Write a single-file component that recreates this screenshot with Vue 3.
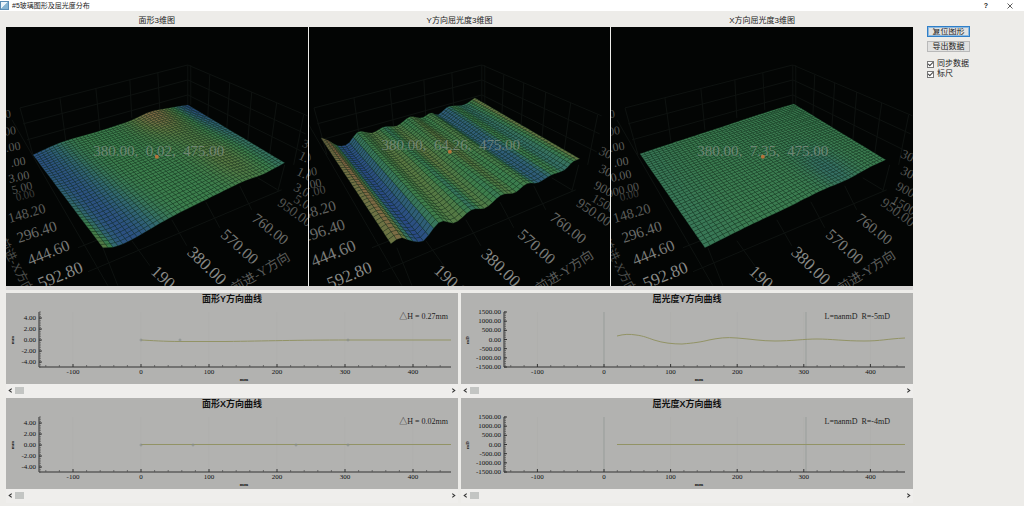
<script setup>
import { ref } from 'vue'

const syncData = ref(true)
const ruler = ref(true)

function homography(p0, p1, p2, p3) {
  const dx1 = p1[0] - p2[0], dx2 = p3[0] - p2[0], dx3 = p0[0] - p1[0] + p2[0] - p3[0]
  const dy1 = p1[1] - p2[1], dy2 = p3[1] - p2[1], dy3 = p0[1] - p1[1] + p2[1] - p3[1]
  const den = dx1 * dy2 - dx2 * dy1
  const g = (dx3 * dy2 - dx2 * dy3) / den
  const h = (dx1 * dy3 - dx3 * dy1) / den
  const a = p1[0] - p0[0] + g * p1[0], b = p3[0] - p0[0] + h * p3[0]
  const d = p1[1] - p0[1] + g * p1[1], e = p3[1] - p0[1] + h * p3[1]
  return (u, v) => {
    const w = g * u + h * v + 1
    return [(a * u + b * v + p0[0]) / w, (d * u + e * v + p0[1]) / w]
  }
}

// Catmull-Rom through points sorted by x
function curveAt(pts, x) {
  const n = pts.length
  if (x <= pts[0][0]) return pts[0][1]
  if (x >= pts[n - 1][0]) return pts[n - 1][1]
  let i = 0
  while (x > pts[i + 1][0]) i++
  const slope = k => {
    const a = pts[Math.max(0, k - 1)], b = pts[Math.min(n - 1, k + 1)]
    return (b[1] - a[1]) / (b[0] - a[0])
  }
  const [x0, y0] = pts[i], [x1, y1] = pts[i + 1]
  const s = x1 - x0, t = (x - x0) / s
  const t2 = t * t, t3 = t2 * t
  return (2 * t3 - 3 * t2 + 1) * y0 + (t3 - 2 * t2 + t) * s * slope(i) +
    (3 * t2 - 2 * t3) * y1 + (t3 - t2) * s * slope(i + 1)
}

const ramp = [
  [0, 42, 74, 134], [0.3, 50, 104, 112], [0.5, 60, 126, 76], [0.72, 92, 120, 66], [1, 138, 104, 70]
]
function shade(t) {
  t = Math.min(1, Math.max(0, t))
  let i = 0
  while (i < ramp.length - 2 && t > ramp[i + 1][0]) i++
  const a = ramp[i], b = ramp[i + 1], k = (t - a[0]) / (b[0] - a[0])
  return `rgb(${[1, 2, 3].map(c => Math.round(a[c] + (b[c] - a[c]) * k)).join(',')})`
}

const bell = (x, w) => Math.exp(-(x * x) / (w * w))

function surface(s) {
  const h = homography(...s.corners)
  const NU = 46, NV = 38
  const at = (u, v) => {
    const p = h(u, v), b = h(u, 0), f = h(u, 1)
    const db = curveAt(s.back, b[0]) - b[1], df = curveAt(s.front, f[0]) - f[1]
    return `${p[0].toFixed(1)},${(p[1] + db * (1 - v) + df * v).toFixed(1)}`
  }
  const cells = []
  for (let j = 0; j < NV; j++) {
    for (let i = 0; i < NU; i++) {
      const u0 = i / NU, u1 = (i + 1) / NU, v0 = j / NV, v1 = (j + 1) / NV
      cells.push({
        points: [at(u0, v0), at(u1, v0), at(u1, v1), at(u0, v1)].join(' '),
        fill: shade(s.tone((u0 + u1) / 2, (v0 + v1) / 2))
      })
    }
  }
  return cells
}

const ridges = [
  [0, 0.85], [0.04, 1], [0.075, 0.5], [0.105, 0.02], [0.15, 0.1], [0.19, 0.45], [0.25, 0.62], [0.3, 0.66], [0.36, 0.4],
  [0.42, 0.64], [0.49, 0.46], [0.55, 0.66], [0.61, 0.48], [0.66, 0.56], [0.72, 0.2], [0.77, 0.22],
  [0.83, 0.52], [0.89, 0.36], [0.95, 0.48], [1, 0.85]
]

// label rows: text, centre x, centre y, rotation, size, opacity
const views = [
  {
    title: '面形3维图',
    box: '6 27 302 259',
    dx: 0,
    corners: [[33, 155], [188, 105], [285, 163], [103, 248]],
    back: [[33, 155], [60, 143], [100, 131], [130, 121], [150, 112], [170, 108], [188, 105]],
    front: [[103, 248], [115, 247], [130, 241], [170, 218], [210, 198], [245, 181], [262, 175], [285, 163]],
    tone: (u, v) => 0.5 - 0.44 * bell(u - 0.13 * v, 0.13) + 0.45 * bell(u - 0.72, 0.14) * bell(v, 0.35) -
      0.4 * bell(u - 1, 0.1) * bell(v, 0.4) + 0.2 * bell(u - 0.78, 0.12) * bell(v - 0.75, 0.3) -
      0.12 * bell(u - 1, 0.08) + 0.4 * bell(u, 0.05) * v * v,
    readout: ['380.00,  0.02,  475.00', 159, 156],
    dot: [157, 157],
    labels: [
      ['0', 8, 114, -8, 12, .5], ['00', 10, 131, -8, 12, .5], ['.00', 13, 147, -10, 12, .55],
      ['.00', 18, 162, -10, 12, .6], ['3.00', 19, 177, -12, 12, .6], ['5.00', 22, 188, -14, 12, .5],
      ['0.00', 25, 195, -14, 11, .35], ['148.20', 27, 214, -16, 14, .55], ['296.40', 37, 233, -18, 15, .65],
      ['444.60', 49, 254, -22, 16, .75], ['592.80', 61, 277, -22, 17, .85],
      ['前进-X方向', 16, 266, 62, 12, .45],
      ['190.00', 170, 286, 43, 17, .85], ['380.00', 206, 267, 44, 17, .85], ['570.00', 239, 248, 42, 16, .75],
      ['760.00', 270, 230, 38, 15, .65], ['950.00', 295, 213, 36, 14, .5], ['5.00', 305, 204, 30, 13, .5],
      ['3.00', 305, 192, 28, 13, .5], ['1.00', 308, 176, 26, 13, .55], ['1.00', 310, 160, 26, 13, .5],
      ['3', 306, 144, 20, 12, .4], ['前进-Y方向', 261, 273, -31, 13, .55]
    ]
  },
  {
    title: 'Y方向屈光度3维图',
    box: '309 27 302 259',
    dx: 294,
    corners: [[321, 139], [475, 98], [580, 159], [391, 244]],
    back: [[321, 138], [329, 141], [338, 146], [348, 144], [358, 132], [372, 133], [384, 127], [397, 126], [410, 117],
      [422, 118], [431, 113], [438, 115], [448, 107], [464, 105], [475, 98]],
    front: [[391, 244], [400, 238], [408, 240], [416, 242], [424, 241], [440, 222], [455, 223], [472, 210], [486, 208],
      [502, 195], [515, 193], [527, 184], [538, 183], [552, 175], [565, 170], [573, 162], [580, 159]],
    tone: (u, v) => curveAt(ridges, u) - (u < 0.08 ? 0.1 * v : 0) + 0.12 * bell(v - 0.4, 0.3) * bell(u - 0.5, 0.2),
    readout: ['380.00,  64.26,  475.00', 451, 150],
    dot: [450, 152],
    labels: [
      ['0', 308, 157, -10, 12, .4], ['00', 311, 172, -10, 12, .5], ['.00', 314, 184, -12, 12, .55],
      ['.00', 318, 191, -14, 12, .45], ['148.20', 316, 212, -16, 15, .6], ['296.40', 324, 232, -18, 16, .65],
      ['444.60', 334, 255, -22, 17, .75], ['592.80', 350, 277, -22, 17, .85],
      ['190.00', 453, 285, 43, 17, .85], ['380.00', 500, 269, 44, 17, .85], ['570.00', 536, 248, 42, 16, .75],
      ['760.00', 568, 229, 38, 15, .65], ['950.00', 594, 213, 34, 14, .55], ['1500.00', 611, 208, 30, 13, .5],
      ['900.00', 611, 193, 28, 13, .55], ['300.00', 616, 176, 26, 13, .55], ['300.00', 616, 158, 26, 13, .5],
      ['前进-Y方向', 565, 272, -33, 13, .55]
    ]
  },
  {
    title: 'X方向屈光度3维图',
    box: '612 27 302 259',
    dx: 606,
    corners: [[641, 154], [795, 104], [887, 160], [706, 248]],
    back: [[641, 154], [680, 141], [720, 128], [750, 118], [775, 110], [795, 104]],
    front: [[706, 248], [750, 226], [790, 207], [820, 192], [850, 179], [870, 168], [887, 160]],
    tone: (u, v) => 0.48 - 0.12 * bell(u - 0.72, 0.1) * bell(v - 0.85, 0.25) - 0.04 * bell(u, 0.15),
    readout: ['380.00,  7.35,  475.00', 764, 156],
    dot: [764, 157],
    labels: [
      ['0', 613, 114, -8, 12, .5], ['00', 615, 131, -8, 12, .5], ['.00', 618, 147, -10, 12, .55],
      ['.00', 622, 162, -10, 12, .6], ['0.00', 622, 176, -12, 12, .6], ['900.00', 624, 190, -14, 12, .5],
      ['0.00', 630, 195, -14, 11, .35], ['148.20', 633, 214, -16, 14, .55], ['296.40', 643, 233, -18, 15, .65],
      ['444.60', 655, 254, -22, 16, .75], ['592.80', 667, 277, -22, 17, .85],
      ['前进-X方向', 620, 266, 62, 12, .45],
      ['190.00', 769, 286, 43, 17, .85], ['380.00', 811, 267, 44, 17, .85], ['570.00', 845, 248, 42, 16, .75],
      ['760.00', 875, 230, 38, 15, .65], ['950.00', 899, 213, 36, 14, .5], ['1500.00', 912, 210, 30, 13, .5],
      ['900.00', 914, 194, 28, 13, .5], ['300.00', 919, 178, 26, 13, .55], ['300.00', 919, 161, 26, 13, .5],
      ['前进-Y方向', 868, 272, -33, 13, .55]
    ]
  }
].map(v => ({ ...v, cells: surface(v) }))

const wire = [
  'M20 108L188 65L308 116', 'M23 124L188 80L306 134', 'M27 140L188 95L303 152',
  'M20 108L33 155', 'M60 98L66 142', 'M96 89L100 130', 'M130 80L132 118', 'M158 73L160 110', 'M188 65V105',
  'M191 65V105', 'M210 75L208 118', 'M230 83L227 130', 'M252 92L248 142', 'M277 103L270 154', 'M304 115L294 165',
  'M12 120L108 286', 'M88 272L282 190', 'M78 248L103 238', 'M103 248L118 286', 'M132 241L150 266',
  'M172 220L187 246', 'M206 202L220 228', 'M240 186L252 210', 'M285 165L278 192', 'M258 178L278 190'
].join('')

function axes(x0, unit, from, to) {
  const major = [-100, 0, 100, 200, 300, 400].map(v => ({ text: String(v), x: x0 + v * unit }))
  const minor = []
  for (let v = -140; v <= 440; v += 20) if (v % 100) minor.push(x0 + v * unit)
  return { major, minor, from, to }
}
const leftX = axes(135, 0.68, 33, 445)
const rightX = axes(143, 0.666, 43, 444)
const leftY = ['4.00', '2.00', '0.00', '-2.00', '-4.00'].map((text, i) => ({ text, y: 25 + i * 11 }))
const rightY = ['1500.00', '1000.00', '500.00', '0.00', '-500.00', '-1000.00', '-1500.00']
  .map((text, i) => ({ text, y: 19 + i * 55 / 6 }))
const fine = n => Array.from({ length: n }, (_, i) => 19 + i * 55 / (n - 1))

const charts = [
  {
    title: '面形Y方向曲线', note: '△H = 0.27mm', noteEnd: 442, x: leftX, y: leftY, ticks: fine(26), unit: 'mm',
    curve: 'M135 47C145 47.500 158 48.500 175 48.500H220C260 48 290 47 342 47H445',
    marks: [135, 174, 342], rules: []
  },
  {
    title: '屈光度Y方向曲线', note: 'L=nanmD  R=-5mD', noteEnd: 429, x: rightX, y: rightY, ticks: fine(31), unit: 'mD',
    curve: 'M156 43C163 41 169 41 175 42C183 43 187 45 193 47C202 50 212 51 221 51C233 50 240 49 248 47C258 45 265 44 276 45C290 46 300 48 314 48C330 48 343 46 356 46C370 46 383 48 403 48C420 48 425 46 444 45',
    marks: [], rules: [143, 345]
  },
  {
    title: '面形X方向曲线', note: '△H = 0.02mm', noteEnd: 442, x: leftX, y: leftY, ticks: fine(26), unit: 'mm',
    curve: 'M135 46.500H445', marks: [135, 187, 290, 342], rules: []
  },
  {
    title: '屈光度X方向曲线', note: 'L=nanmD  R=-4mD', noteEnd: 429, x: rightX, y: rightY, ticks: fine(31), unit: 'mD',
    curve: 'M156 46.500H444', marks: [], rules: [143, 345]
  }
]
</script>

<template>
  <div class="window">
    <header class="titlebar">
      <svg class="logo" viewBox="0 0 9 9" aria-hidden="true">
        <rect width="9" height="9" fill="#5b8db5" />
        <path d="M1 1H8L1 8Z" fill="#eaf4fb" />
        <path d="M8 1V8H1Z" fill="#86b4d2" />
      </svg>
      <h1>#5玻璃图形及屈光度分布</h1>
      <button class="win-btn" type="button" aria-label="Help">?</button>
      <button class="win-btn" type="button" aria-label="Close">
        <svg viewBox="0 0 6 6"><path d="M.5 .5L5.500 5.500M5.500 .5L.5 5.500" stroke="#333" stroke-width=".8" /></svg>
      </button>
    </header>

    <div class="body">
      <main>
        <section class="views">
          <figure v-for="v in views" :key="v.title" class="view">
            <figcaption>{{ v.title }}</figcaption>
            <svg :viewBox="v.box">
              <path class="wire" :d="wire" :transform="`translate(${v.dx} 0)`" />
              <g class="mesh">
                <polygon v-for="(c, i) in v.cells" :key="i" :points="c.points" :fill="c.fill" />
              </g>
              <text
                v-for="(l, i) in v.labels" :key="i" class="tick3d" text-anchor="middle"
                :transform="`translate(${l[1]} ${l[2]}) rotate(${l[3]})`" :font-size="l[4]" :opacity="l[5]" dy="4"
              >{{ l[0] }}</text>
              <text class="readout" text-anchor="middle" :x="v.readout[1]" :y="v.readout[2]">{{ v.readout[0] }}</text>
              <circle :cx="v.dot[0]" :cy="v.dot[1]" r="2" fill="#b5743c" />
            </svg>
          </figure>
        </section>

        <div class="splitter"></div>

        <section class="charts">
          <div v-for="c in charts" :key="c.title" class="chart">
            <svg viewBox="0 0 452 91">
              <text class="chart-title" x="226" y="9" text-anchor="middle">{{ c.title }}</text>
              <line v-for="m in c.x.major" :key="'g' + m.text" :x1="m.x" :x2="m.x" y1="19" y2="74" class="grid" />
              <line v-for="r in c.rules" :key="'r' + r" :x1="r" :x2="r" y1="19" y2="74" class="rule" />
              <path class="axis" :d="`M${c.x.from} 19V74H${c.x.to}`" />
              <line v-for="(t, i) in c.ticks" :key="'f' + i" class="axis thin" :x1="c.x.from" :x2="c.x.from + 2" :y1="t" :y2="t" />
              <g v-for="t in c.y" :key="t.text">
                <line class="axis" :x1="c.x.from" :x2="c.x.from + 3" :y1="t.y" :y2="t.y" />
                <text class="num" :x="c.x.from - 3" :y="t.y + 2" text-anchor="end">{{ t.text }}</text>
              </g>
              <line v-for="(t, i) in c.x.minor" :key="'n' + i" class="axis thin" :x1="t" :x2="t" y1="72" y2="74" />
              <g v-for="m in c.x.major" :key="m.text">
                <line class="axis" :x1="m.x" :x2="m.x" y1="71" y2="74" />
                <text class="num" :x="m.x" y="81" text-anchor="middle">{{ m.text }}</text>
              </g>
              <text class="unit" x="238" y="88" text-anchor="middle">mm</text>
              <text class="unit" transform="translate(8 47) rotate(-90)" text-anchor="middle">{{ c.unit }}</text>
              <path class="curve" :d="c.curve" />
              <circle v-for="m in c.marks" :key="'m' + m" :cx="m" cy="47" r="1" class="mark" />
              <text class="note" :x="c.noteEnd" y="26" text-anchor="end">{{ c.note }}</text>
            </svg>
            <div class="scroll">
              <button type="button" aria-label="Scroll left">
                <svg viewBox="0 0 4 4"><path d="M3 .5L1 2L3 3.500" /></svg>
              </button>
              <span class="thumb"></span>
              <button class="end" type="button" aria-label="Scroll right">
                <svg viewBox="0 0 4 4"><path d="M1 .5L3 2L1 3.500" /></svg>
              </button>
            </div>
          </div>
        </section>
      </main>

      <aside>
        <button class="cmd focus" type="button">复位图形</button>
        <button class="cmd" type="button">导出数据</button>
        <label class="check first"><input v-model="syncData" type="checkbox" />同步数据</label>
        <label class="check"><input v-model="ruler" type="checkbox" />标尺</label>
      </aside>
    </div>
  </div>
</template>

<style>
html,
body {
  background: #edece9;
}
</style>

<style scoped>
.window {
  min-height: 100vh;
  background: #edece9;
  font-family: "Liberation Sans", "Noto Sans CJK SC", sans-serif;
  color: #222;
}
button {
  font: inherit;
  padding: 0;
  border: 0;
  background: none;
  color: inherit;
}
svg {
  display: block;
}
.titlebar {
  display: flex;
  align-items: center;
  height: 11px;
  background: #fff;
  padding-right: 2px;
}
.logo {
  width: 9px;
  height: 9px;
}
h1 {
  flex: 1;
  margin: 0 0 0 3px;
  font-size: 7px;
  line-height: 11px;
  font-weight: 400;
}
.win-btn {
  display: flex;
  align-items: center;
  justify-content: center;
  width: 24px;
  height: 11px;
  font-size: 7px;
  font-weight: 700;
}
.win-btn svg {
  width: 6px;
  height: 6px;
}
.body {
  display: flex;
}
main {
  flex: 1;
  min-width: 0;
  padding-left: 6px;
}
.views {
  display: grid;
  grid-template-columns: repeat(3, 1fr);
  column-gap: 1px;
}
.view {
  margin: 0;
}
.view > svg {
  width: 100%;
  height: auto;
  background: #030504;
}
figcaption {
  height: 16px;
  line-height: 20px;
  font-size: 8px;
  text-align: center;
}
.wire {
  fill: none;
  stroke: #0e1210;
  stroke-width: 1;
}
.mesh polygon {
  stroke: #14301f;
  stroke-opacity: .45;
  stroke-width: .6;
}
.tick3d {
  font-family: "Liberation Serif", "Noto Sans CJK SC", serif;
  fill: #a0a19f;
}
.readout {
  font-family: "Liberation Serif", serif;
  font-size: 15px;
  fill: #7d8d80;
  opacity: .8;
  white-space: pre;
}
.splitter {
  height: 4px;
  margin: 0 0 3px;
  background: #d8d7d6;
}
.charts {
  display: grid;
  grid-template-columns: 1fr 1fr;
  column-gap: 3px;
}
.chart > svg {
  width: 100%;
  height: auto;
  background: #b2b2b0;
}
.chart-title {
  font-size: 9px;
  font-weight: 700;
  fill: #111;
}
.axis {
  fill: none;
  stroke: #333;
  stroke-width: 1;
}
.thin {
  stroke: #555;
  stroke-width: .8;
}
.grid {
  stroke: #afafad;
}
.rule {
  stroke: #999e9b;
  stroke-width: 1;
}
.num {
  font-family: "Liberation Serif", serif;
  font-size: 7px;
  fill: #111;
}
.unit {
  font-family: "Liberation Serif", serif;
  font-size: 5px;
  font-weight: 700;
  fill: #111;
}
.note {
  font-family: "Liberation Serif", "Noto Sans CJK SC", serif;
  font-size: 8px;
  fill: #222;
  white-space: pre;
}
.curve {
  fill: none;
  stroke: #929365;
  stroke-width: 1;
}
.mark {
  fill: none;
  stroke: #858b8a;
  stroke-width: .8;
}
.scroll {
  display: flex;
  align-items: center;
  height: 14px;
  padding: 0 2px;
  background: #efeeec;
}
.scroll svg {
  width: 5px;
  height: 5px;
  fill: none;
  stroke: #333;
  stroke-width: .9;
}
.thumb {
  width: 9px;
  height: 7px;
  margin-left: 2px;
  background: #c3c5c3;
}
.end {
  margin-left: auto;
}
aside {
  display: flex;
  flex-direction: column;
  align-items: flex-start;
  box-sizing: border-box;
  width: 111px;
  padding: 15px 0 0 14px;
  font-size: 8px;
}
.cmd {
  box-sizing: border-box;
  width: 43px;
  height: 11px;
  margin-bottom: 4px;
  border: 1px solid #b9b9b9;
  background: #e1e1e0;
  line-height: 9px;
}
.focus {
  border-color: #2f7fc8;
  outline: 1px solid #8db9e0;
  outline-offset: -2px;
}
.check {
  display: flex;
  align-items: center;
  gap: 3px;
  height: 10px;
  line-height: 10px;
}
.first {
  margin-top: 3px;
}
.check input {
  appearance: none;
  position: relative;
  box-sizing: border-box;
  width: 7px;
  height: 7px;
  margin: 0;
  border: 1px solid #777;
  background: #fff;
}
.check input:checked::after {
  content: "";
  position: absolute;
  left: 0;
  top: 0;
  width: 5px;
  height: 3px;
  border-left: 1px solid #444;
  border-bottom: 1px solid #444;
  transform: rotate(-45deg);
  box-sizing: border-box;
}
</style>
